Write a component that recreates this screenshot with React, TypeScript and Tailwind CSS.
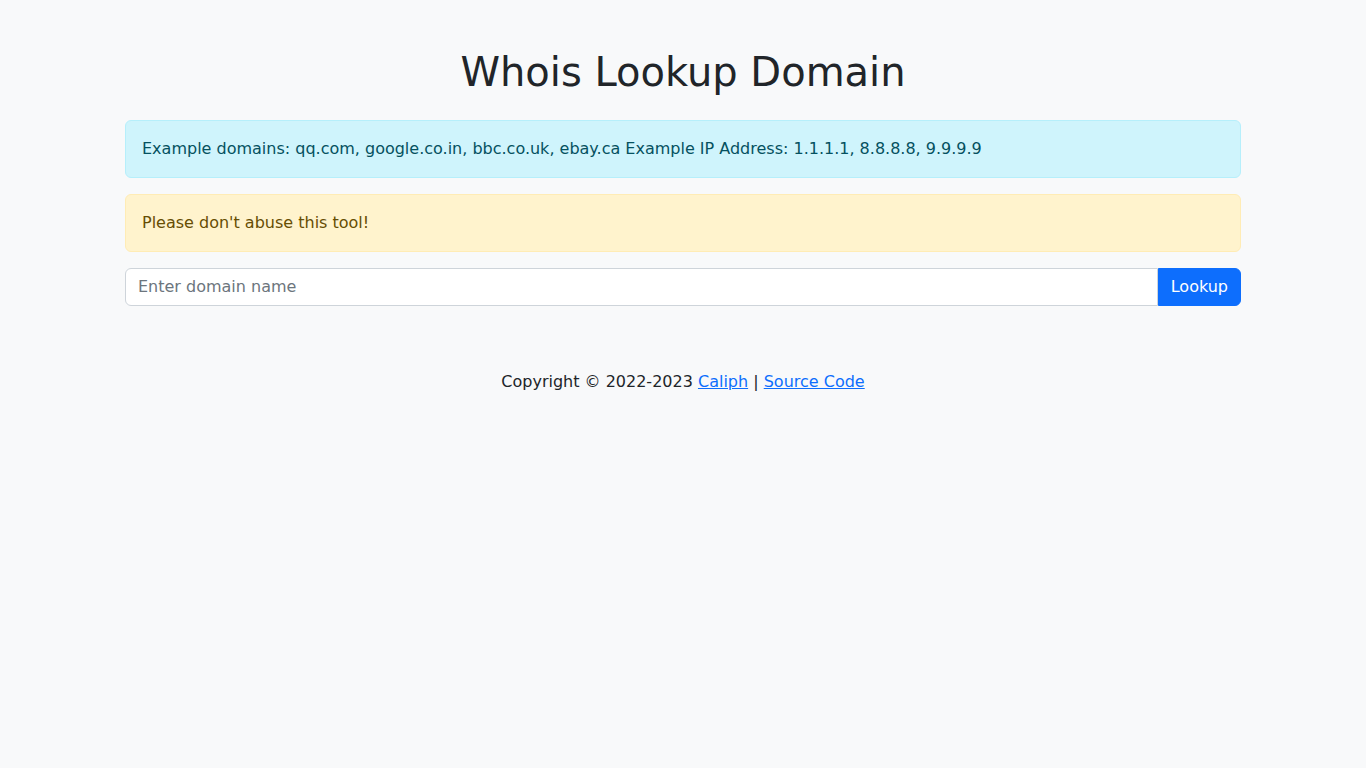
import React from "react";

export default function App() {
  return (
    <div
      className="min-h-[768px] bg-[#f8f9fa] text-[#212529] text-base leading-6"
      style={{ fontFamily: '"DejaVu Sans", sans-serif' }}
    >
      <div className="mx-auto w-[1140px] px-3 pt-12">
        <h1 className="mb-6 text-center text-[40px] font-medium leading-[1.2]">
          Whois Lookup Domain
        </h1>
        <div className="mb-4 rounded-md border border-[#b6effb] bg-[#cff4fc] p-4 text-[#055160]">
          Example domains: qq.com, google.co.in, bbc.co.uk, ebay.ca Example IP Address: 1.1.1.1, 8.8.8.8, 9.9.9.9
        </div>
        <div className="mb-4 rounded-md border border-[#ffecb5] bg-[#fff3cd] p-4 text-[#664d03]">
          Please don't abuse this tool!
        </div>
        <form className="mb-4 flex" onSubmit={(e) => e.preventDefault()}>
          <input
            type="text"
            placeholder="Enter domain name"
            className="h-[38px] min-w-0 flex-1 rounded-l-md border border-[#ced4da] bg-white px-3 pt-[5px] pb-[7px] text-base leading-6 text-[#212529] outline-none placeholder:text-[#6c757d]"
          />
          <button
            type="submit"
            className="h-[38px] rounded-r-md border border-[#0d6efd] bg-[#0d6efd] px-3 text-base text-white"
          >
            Lookup
          </button>
        </form>
        <footer className="mt-16 text-center">
          Copyright © 2022-2023{" "}
          <a href="#" className="text-[#0d6efd] underline">
            Caliph
          </a>{" "}
          |{" "}
          <a href="#" className="text-[#0d6efd] underline">
            Source Code
          </a>
        </footer>
      </div>
    </div>
  );
}
